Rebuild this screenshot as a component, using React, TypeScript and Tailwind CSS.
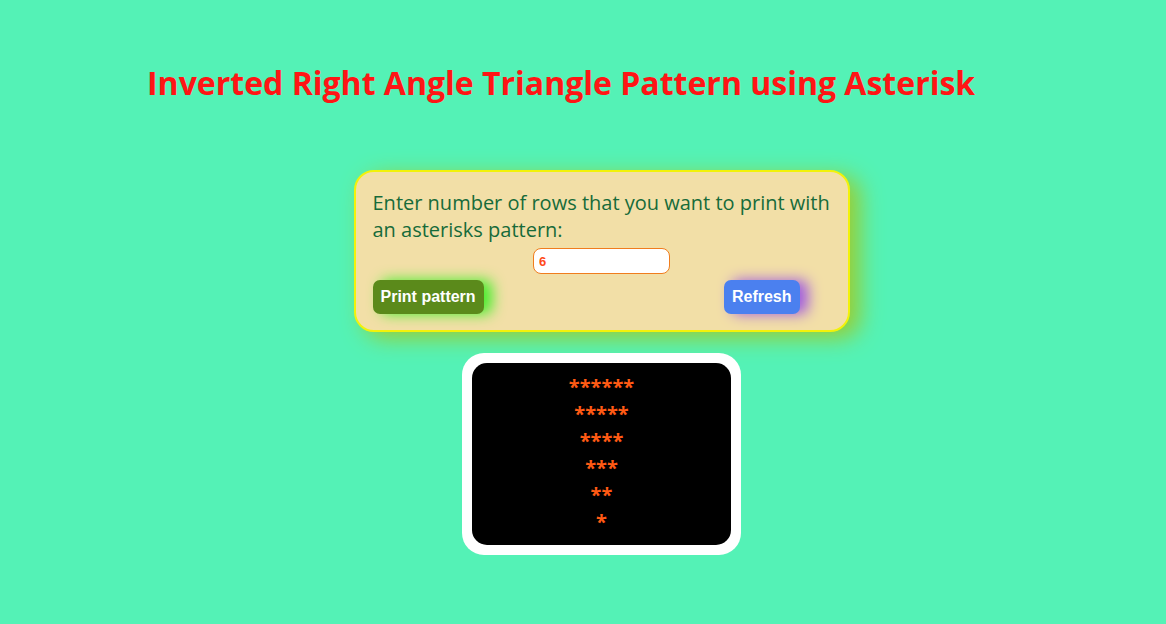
import { useState } from "react";

const font = { fontFamily: "'Open Sans', sans-serif" };

function buildRows(n: number) {
  const rows: string[] = [];
  for (let i = n; i >= 1; i--) rows.push("*".repeat(i));
  return rows;
}

export default function App() {
  const [value, setValue] = useState("6");
  const [rows, setRows] = useState<string[]>(buildRows(6));

  return (
    <div className="min-h-[624px] w-full bg-[#54f2b6]" style={font}>
      <h1 className="pt-[61px] pl-[147px] text-[32px] leading-[44px] font-bold text-[#ff1515] whitespace-nowrap">
        Inverted Right Angle Triangle Pattern using Asterisk
      </h1>

      <div className="flex flex-col items-center pl-[37px] pt-[65px]">
        {/* input card */}
        <div className="w-[496px] h-[162px] rounded-[20px] border-2 border-[#f2f20a] bg-[#f2dfa7] pl-[17px] pr-[17px] pt-[17px] shadow-[10px_6px_22px_#9acd32]">
          <p className="text-[20px] leading-[27px] text-[#176b3a]">
            Enter number of rows that you want to print with an asterisks pattern:
          </p>
          <div className="flex justify-center mt-[5px]">
            <input
              value={value}
              onChange={(e) => setValue(e.target.value)}
              className="w-[137px] h-[26px] rounded-[8px] border border-[#f07d1e] bg-white px-[5px] text-[13px] font-bold text-[#ff4a1a] outline-none"
              style={{ fontFamily: "'Liberation Sans', Arial, sans-serif" }}
            />
          </div>
          <div
            className="flex justify-between mt-[6px] mr-[31px]"
            style={{ fontFamily: "'Liberation Sans', Arial, sans-serif" }}
          >
            <button
              onClick={() => setRows(buildRows(parseInt(value) || 0))}
              className="h-[34px] px-[8px] rounded-[7px] bg-[#5b8a1b] text-[16px] font-bold text-white shadow-[8px_0_14px_#44ee2a]"
            >
              Print pattern
            </button>
            <button
              onClick={() => {
                setValue("");
                setRows([]);
              }}
              className="h-[34px] px-[8px] rounded-[7px] bg-[#4b80ef] text-[16px] font-bold text-white shadow-[8px_0_14px_#a05be0]"
            >
              Refresh
            </button>
          </div>
        </div>

        {/* output */}
        <div className="mt-[21px] w-[279px] rounded-[22px] bg-white p-[10px]">
          <div className="rounded-[15px] bg-black py-[10px] flex flex-col items-center">
            {rows.map((r, i) => (
              <div key={i} className="text-[20px] leading-[27px] font-bold text-[#ff5a14]">
                {r}
              </div>
            ))}
          </div>
        </div>
      </div>
    </div>
  );
}
